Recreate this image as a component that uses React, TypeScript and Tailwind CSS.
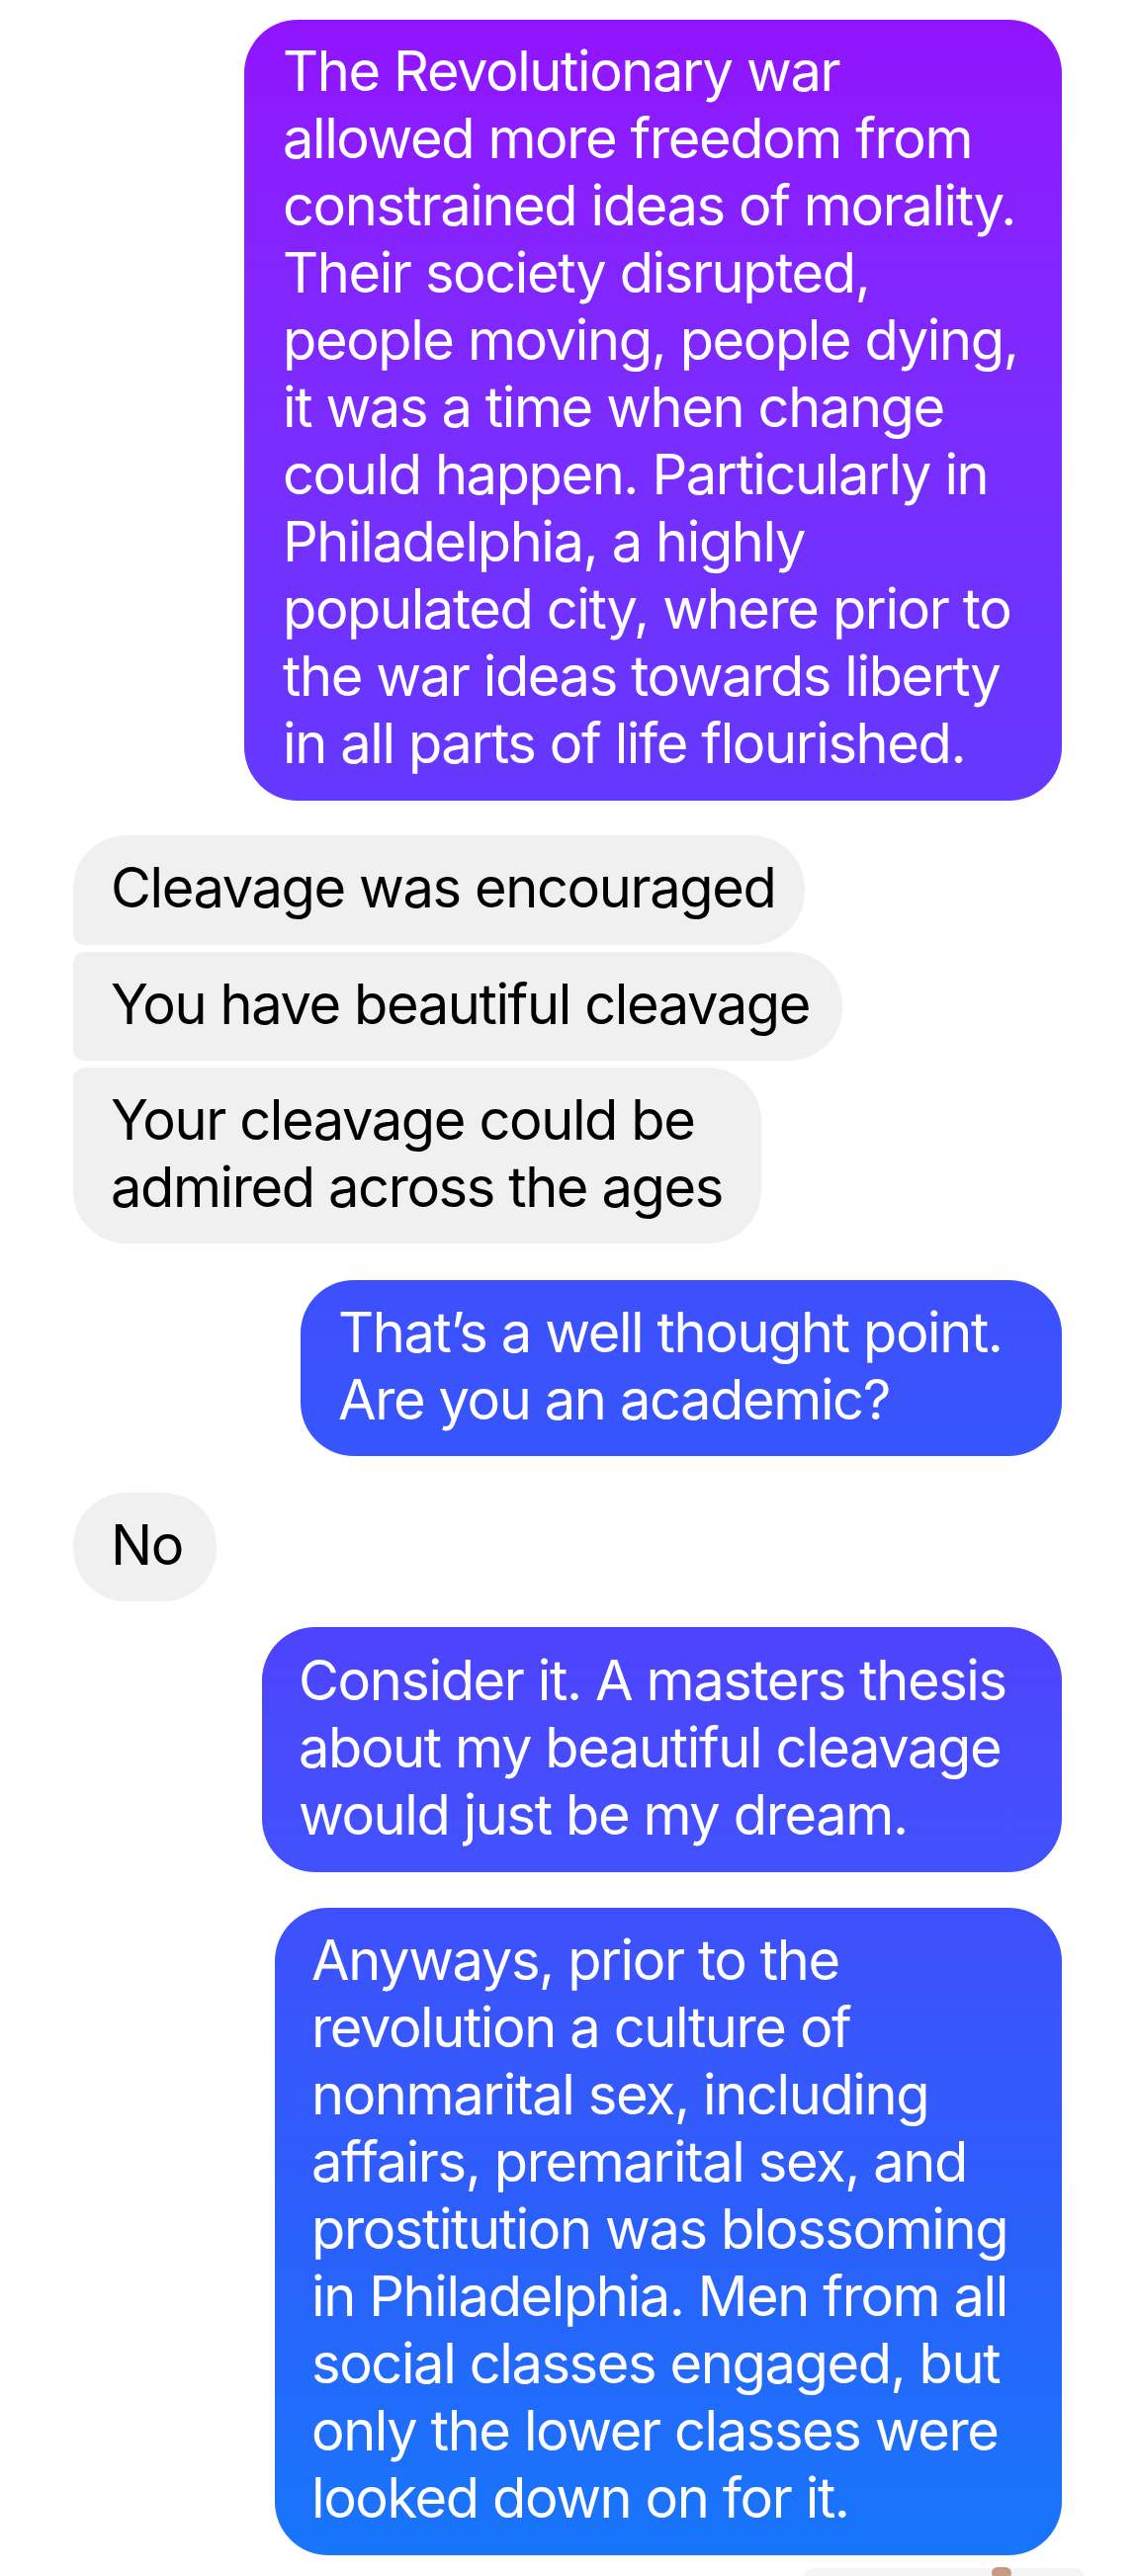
import React from "react";

type BubbleProps = {
  lines: string[];
  className: string;
};

function Bubble({ lines, className }: BubbleProps) {
  return (
    <div className={className}>
      {lines.map((l, i) => (
        <div key={i} className="whitespace-nowrap">
          {l}
        </div>
      ))}
    </div>
  );
}

export default function App() {
  return (
    <div className="w-[1149px] h-[2606px] bg-white overflow-hidden relative font-['Inter','Roboto',sans-serif] text-[56px] leading-[68px] tracking-[-0.025em]">
      <div className="flex flex-col pl-[74px] pr-[75px] pt-[20px]">
        <Bubble
          className="self-end w-[827px] h-[790px] pl-[39px] pr-[30px] pt-[18px] rounded-[54px] text-white bg-linear-to-b from-[#9113fe] to-[#6338ff]"
          lines={[
            "The Revolutionary war",
            "allowed more freedom from",
            "constrained ideas of morality.",
            "Their society disrupted,",
            "people moving, people dying,",
            "it was a time when change",
            "could happen. Particularly in",
            "Philadelphia, a highly",
            "populated city, where prior to",
            "the war ideas towards liberty",
            "in all parts of life flourished.",
          ]}
        />
        <Bubble
          className="mt-[35px] self-start w-[740px] h-[111px] pl-[38px] pt-[19px] bg-[#f0f0f0] text-black rounded-[54px] rounded-bl-[12px]"
          lines={["Cleavage was encouraged"]}
        />
        <Bubble
          className="mt-[7px] self-start w-[778px] h-[110px] pl-[38px] pt-[19px] bg-[#f0f0f0] text-black rounded-r-[54px] rounded-l-[12px]"
          lines={["You have beautiful cleavage"]}
        />
        <Bubble
          className="mt-[7px] self-start w-[696px] h-[178px] pl-[38px] pt-[19px] bg-[#f0f0f0] text-black rounded-[54px] rounded-tl-[12px]"
          lines={["Your cleavage could be", "admired across the ages"]}
        />
        <Bubble
          className="mt-[37px] self-end w-[770px] h-[178px] pl-[38px] pt-[19px] rounded-[54px] text-white bg-linear-to-b from-[#3e4ffe] to-[#3656fd]"
          lines={["That’s a well thought point.", "Are you an academic?"]}
        />
        <Bubble
          className="mt-[37px] self-start w-[145px] h-[110px] pl-[38px] pt-[19px] bg-[#f0f0f0] text-black rounded-[54px]"
          lines={["No"]}
        />
        <Bubble
          className="mt-[26px] self-end w-[809px] h-[248px] pl-[37px] pt-[20px] rounded-[54px] text-white bg-linear-to-b from-[#4e43fe] to-[#4152fd]"
          lines={[
            "Consider it. A masters thesis",
            "about my beautiful cleavage",
            "would just be my dream.",
          ]}
        />
        <Bubble
          className="mt-[36px] self-end w-[796px] h-[655px] pl-[37px] pt-[19px] rounded-[54px] text-white bg-linear-to-b from-[#3e50fc] via-[#2a60fb] to-[#1676fa]"
          lines={[
            "Anyways, prior to the",
            "revolution a culture of",
            "nonmarital sex, including",
            "affairs, premarital sex, and",
            "prostitution was blossoming",
            "in Philadelphia. Men from all",
            "social classes engaged, but",
            "only the lower classes were",
            "looked down on for it.",
          ]}
        />
      </div>
      <div className="absolute left-[813px] top-[2598px] w-[284px] h-[20px] rounded-t-[10px] bg-[#f5f5f5]">
        <div className="absolute left-[190px] top-[-1px] w-[20px] h-[12px] rounded-full bg-[#c89a82]" />
      </div>
    </div>
  );
}
